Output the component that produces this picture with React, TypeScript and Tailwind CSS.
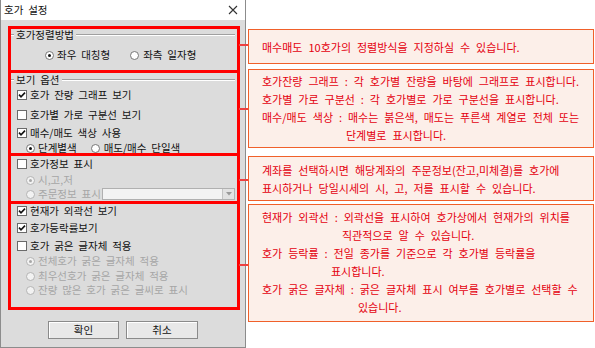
import React from "react";

const Check = ({ on }: { on?: boolean }) => (
  <span className="w-[10px] h-[10px] shrink-0 bg-white border border-[#6a6a6a] flex items-center justify-center">
    {on && (
      <svg width="8" height="8" viewBox="0 0 8 8">
        <path d="M1 3.6 L3 5.8 L7 1.6" stroke="#111" strokeWidth="1.6" fill="none" />
      </svg>
    )}
  </span>
);

const Radio = ({ on, off }: { on?: boolean; off?: boolean }) => (
  <span
    className={`w-[9px] h-[9px] shrink-0 rounded-full border flex items-center justify-center ${
      off ? "bg-[#f2f2f2] border-[#b4b4b4]" : "bg-white border-[#777]"
    }`}
  >
    {on && <span className={`w-[3px] h-[3px] rounded-full ${off ? "bg-[#a8a8a8]" : "bg-[#111]"}`} />}
  </span>
);

// groupbox legend with etched line
const Legend = ({ label }: { label: string }) => (
  <div className="flex items-center h-[10px] pr-[2px]">
    <div className="w-[3px] h-[2px] border-t border-[#a0a0a0] border-b border-b-white" />
    <span className="px-[2px] leading-none">{label}</span>
    <div className="flex-1 h-[2px] border-t border-[#a0a0a0] border-b border-b-white" />
  </div>
);

const Row = ({ children, className = "" }: { children: React.ReactNode; className?: string }) => (
  <div className={`flex items-center h-[14px] whitespace-nowrap ${className}`}>{children}</div>
);

const Note = ({
  top,
  className,
  children,
}: {
  top: number;
  className: string;
  children: React.ReactNode;
}) => (
  <div className={`relative border-[1.5px] border-[#f0602a] bg-[#fcefe9] pl-[13px] text-[#e4000f] ${className}`}>
    <div className="absolute -left-[10px] w-[9px] h-[2px] bg-[#ee4040]" style={{ top }} />
    {children}
  </div>
);

const App = () => {
  return (
    <div className="w-[595px] h-[348px] bg-white flex font-['Noto_Sans_CJK_KR','Noto_Sans',sans-serif] overflow-hidden">
      {/* dialog */}
      <div className="w-[246px] h-[348px] shrink-0 border border-t-0 border-[#8c8c8c] bg-[#dcdcdc] flex flex-col text-[10.5px] text-[#111] [word-spacing:2.5px]">
        <div className="h-[20px] bg-white flex items-center justify-between pl-[3px] pr-[7px]">
          <span className="text-[10.5px]">호가 설정</span>
          <svg width="10" height="10" viewBox="0 0 10 10">
            <path d="M1 1 L9 9 M9 1 L1 9" stroke="#333" strokeWidth="1.1" />
          </svg>
        </div>

        <div className="mt-[6px] ml-[7px] w-[232px] border-[3px] border-[#ff0000] flex flex-col divide-y-[3px] divide-[#ff0000]">
          <div className="h-[44px] pt-[1px]">
            <Legend label="호가정렬방법" />
            <Row className="mt-[8px] pl-[34px]">
              <Radio on />
              <span className="ml-[3px]">좌우 대칭형</span>
              <span className="ml-[20px]">
                <Radio />
              </span>
              <span className="ml-[4px]">좌측 일자형</span>
            </Row>
          </div>

          <div className="h-[83px] pt-[2px]">
            <Legend label="보기 옵션" />
            <Row className="mt-[3px] pl-[6px]">
              <Check on />
              <span className="ml-[3px]">호가 잔량 그래프 보기</span>
            </Row>
            <Row className="mt-[6px] pl-[6px]">
              <Check />
              <span className="ml-[3px]">호가별 가로 구분선 보기</span>
            </Row>
            <Row className="mt-[4px] pl-[6px]">
              <Check on />
              <span className="ml-[3px]">매수/매도 색상 사용</span>
            </Row>
            <Row className="mt-[1px] pl-[15px]">
              <Radio on />
              <span className="ml-[3px]">단계별색</span>
              <span className="ml-[14px]">
                <Radio />
              </span>
              <span className="ml-[4px]">매도/매수 단일색</span>
            </Row>
          </div>

          <div className="h-[48px] pt-[1px]">
            <Row className="pl-[6px]">
              <Check />
              <span className="ml-[3px]">호가정보 표시</span>
            </Row>
            <Row className="mt-[2px] pl-[15px] text-[#a6a6a6]">
              <Radio on off />
              <span className="ml-[3px]">시,고,저</span>
            </Row>
            <Row className="pl-[15px] text-[#a6a6a6]">
              <Radio off />
              <span className="ml-[3px] shrink-0">주문정보 표시</span>
              <div className="ml-[1px] mr-[2px] flex-1 min-w-0 h-[12px] border border-[#b0b0b0] bg-[#f3f3f3] flex justify-end">
                <div className="w-[12px] h-full bg-[#e2e2e2] border-l border-[#c4c4c4] flex items-center justify-center">
                  <svg width="6" height="4" viewBox="0 0 6 4">
                    <path d="M0 0 L6 0 L3 3.5 Z" fill="#9a9a9a" />
                  </svg>
                </div>
              </div>
            </Row>
          </div>

          <div className="h-[103px] pt-[0px]">
            <Row className="pl-[6px]">
              <Check on />
              <span className="ml-[3px]">현재가 외곽선 보기</span>
            </Row>
            <Row className="mt-[3px] pl-[6px]">
              <Check on />
              <span className="ml-[3px]">호가등락률보기</span>
            </Row>
            <Row className="mt-[4px] pl-[6px]">
              <Check />
              <span className="ml-[3px]">호가 굵은 글자체 적용</span>
            </Row>
            <Row className="mt-[1px] pl-[15px] text-[#a6a6a6]">
              <Radio on off />
              <span className="ml-[3px]">전체호가 굵은 글자체 적용</span>
            </Row>
            <Row className="mt-[1px] pl-[15px] text-[#a6a6a6]">
              <Radio off />
              <span className="ml-[3px]">최우선호가 굵은 글자체 적용</span>
            </Row>
            <Row className="pl-[15px] text-[#a6a6a6]">
              <Radio off />
              <span className="ml-[3px]">잔량 많은 호가 굵은 글씨로 표시</span>
            </Row>
          </div>
        </div>

        <div className="mt-[11px] flex justify-center gap-[7px]">
          <button className="w-[71px] h-[18px] bg-[#e8e8e8] border border-[#8a8a8a] shadow-[inset_1px_1px_0_#fff] text-[10.5px] leading-none">
            확인
          </button>
          <button className="w-[72px] h-[18px] bg-[#e8e8e8] border border-[#8a8a8a] shadow-[inset_1px_1px_0_#fff] text-[10.5px] leading-none">
            취소
          </button>
        </div>
      </div>

      {/* annotations */}
      <div className="ml-[2px] w-[346px] pt-[29px] flex flex-col text-[11px] leading-[18px] [word-spacing:3.5px]">
        <Note top={14} className="h-[35px] flex items-center">
          <span>매수매도 10호가의 정렬방식을 지정하실 수 있습니다.</span>
        </Note>
        <Note top={38} className="mt-[5px] h-[79px] pt-[2px]">
          <p>호가잔량 그래프 : 각 호가별 잔량을 바탕에 그래프로 표시합니다.</p>
          <p>호가별 가로 구분선 : 각 호가별로 가로 구분선을 표시합니다.</p>
          <p>매수/매도 색상 : 매수는 붉은색, 매도는 푸른색 계열로 전체 또는</p>
          <p className="pl-[84px]">단계별로 표시합니다.</p>
        </Note>
        <Note top={22} className="mt-[8px] h-[45px] pt-[4px]">
          <p>계좌를 선택하시면 해당계좌의 주문정보(잔고,미체결)를 호가에</p>
          <p>표시하거나 당일시세의 시, 고, 저를 표시할 수 있습니다.</p>
        </Note>
        <Note top={59} className="mt-[3px] h-[118px] pt-[3px]">
          <p>현재가 외곽선 : 외곽선을 표시하여 호가상에서 현재가의 위치를</p>
          <p className="pl-[80px]">직관적으로 알 수 있습니다.</p>
          <p>호가 등락률 : 전일 종가를 기준으로 각 호가별 등락률을</p>
          <p className="pl-[69px]">표시합니다.</p>
          <p>호가 굵은 글자체 : 굵은 글자체 표시 여부를 호가별로 선택할 수</p>
          <p className="pl-[96px]">있습니다.</p>
        </Note>
      </div>
    </div>
  );
};

export default App;
